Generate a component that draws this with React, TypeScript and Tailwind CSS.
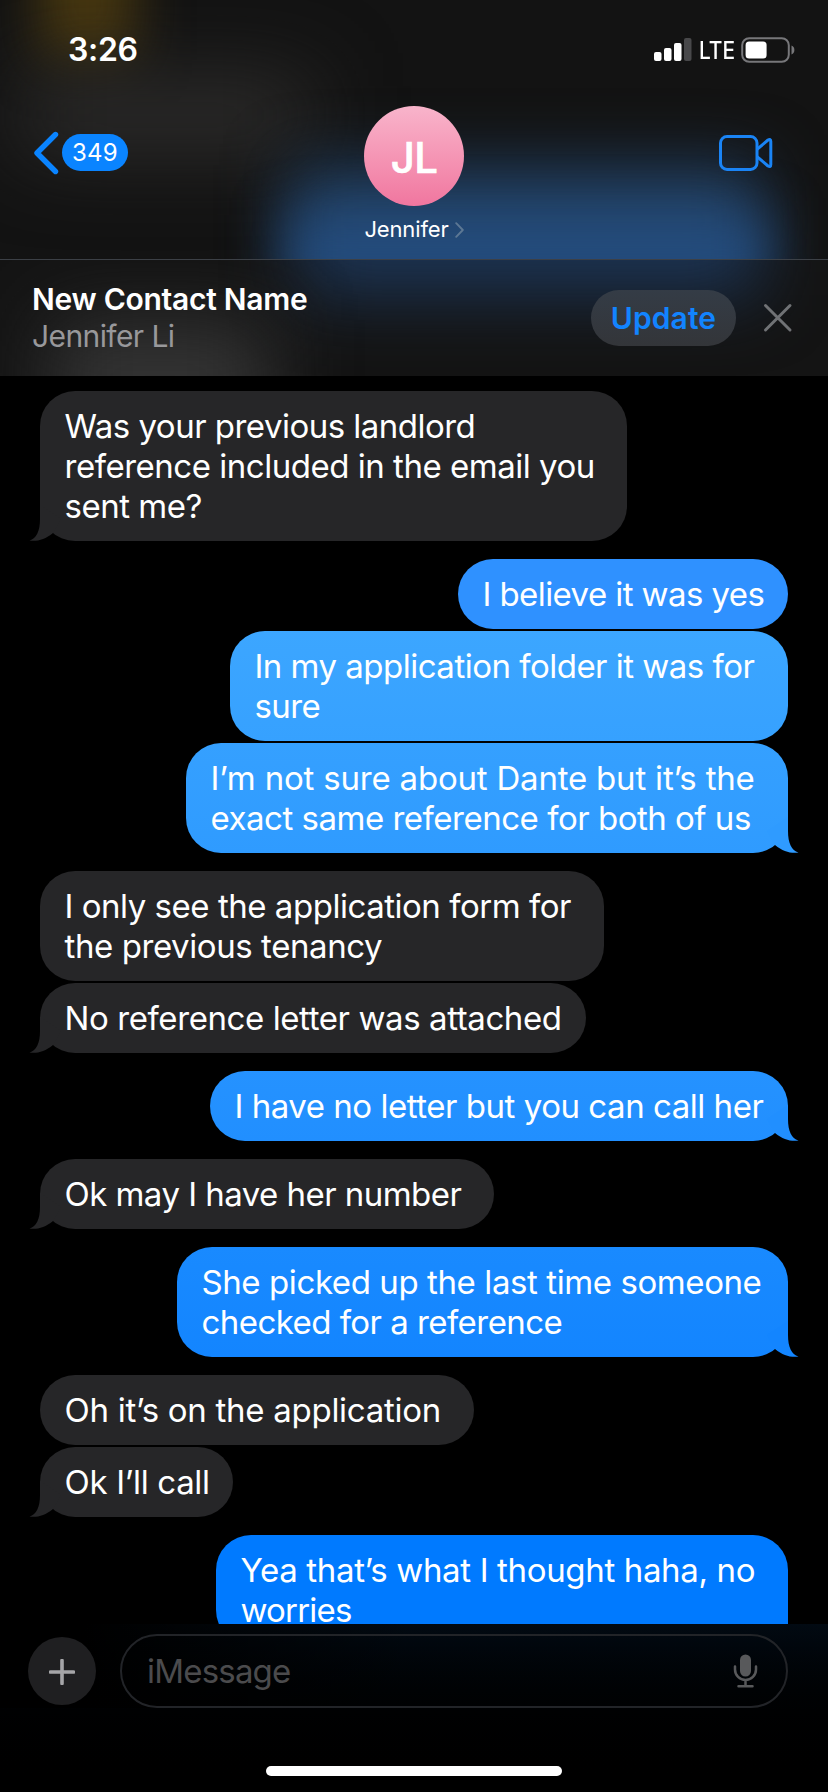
type Line = { text: string; spacing: string };

type Message = {
  from: "me" | "them";
  box: string;
  tail?: boolean;
  lines: Line[];
};

const messages: Message[] = [
  {
    from: "them",
    box: "mt-[15px] w-[587px] bg-[#262628] text-[#262628]",
    tail: true,
    lines: [
      { text: "Was your previous landlord", spacing: "tracking-[-0.52px]" },
      { text: "reference included in the email you", spacing: "tracking-[-0.48px]" },
      { text: "sent me?", spacing: "tracking-[-0.48px]" },
    ],
  },
  {
    from: "me",
    box: "mt-[18px] w-[330px] bg-[#2f91ff] text-[#2f91ff]",
    lines: [{ text: "I believe it was yes", spacing: "tracking-[-0.58px]" }],
  },
  {
    from: "me",
    box: "mt-[2px] w-[558px] bg-linear-to-b from-[#3ca6ff] to-[#36a1ff] text-[#36a1ff]",
    lines: [
      { text: "In my application folder it was for", spacing: "tracking-[-0.51px]" },
      { text: "sure", spacing: "tracking-[-0.6px]" },
    ],
  },
  {
    from: "me",
    box: "mt-[2px] w-[602px] bg-linear-to-b from-[#35a0ff] to-[#2f9bff] text-[#2f9bff]",
    tail: true,
    lines: [
      { text: "I’m not sure about Dante but it’s the", spacing: "tracking-[-0.2px]" },
      { text: "exact same reference for both of us", spacing: "tracking-[-0.49px]" },
    ],
  },
  {
    from: "them",
    box: "mt-[18px] w-[564px] bg-[#262628] text-[#262628]",
    lines: [
      { text: "I only see the application form for", spacing: "tracking-[-0.47px]" },
      { text: "the previous tenancy", spacing: "tracking-[-0.42px]" },
    ],
  },
  {
    from: "them",
    box: "mt-[2px] w-[546px] bg-[#262628] text-[#262628]",
    tail: true,
    lines: [{ text: "No reference letter was attached", spacing: "tracking-[-0.41px]" }],
  },
  {
    from: "me",
    box: "mt-[18px] w-[578px] bg-linear-to-b from-[#2592ff] to-[#218fff] text-[#218fff]",
    tail: true,
    lines: [{ text: "I have no letter but you can call her", spacing: "tracking-[-0.47px]" }],
  },
  {
    from: "them",
    box: "mt-[18px] w-[454px] bg-[#262628] text-[#262628]",
    tail: true,
    lines: [{ text: "Ok may I have her number", spacing: "tracking-[-0.54px]" }],
  },
  {
    from: "me",
    box: "mt-[18px] w-[611px] bg-linear-to-b from-[#198aff] to-[#1385ff] text-[#1385ff]",
    tail: true,
    lines: [
      { text: "She picked up the last time someone", spacing: "tracking-[-0.41px]" },
      { text: "checked for a reference", spacing: "tracking-[-0.55px]" },
    ],
  },
  {
    from: "them",
    box: "mt-[18px] w-[434px] bg-[#262628] text-[#262628]",
    lines: [{ text: "Oh it’s on the application", spacing: "tracking-[-0.28px]" }],
  },
  {
    from: "them",
    box: "mt-[2px] w-[193px] bg-[#262628] text-[#262628]",
    tail: true,
    lines: [{ text: "Ok I’ll call", spacing: "tracking-[-0.32px]" }],
  },
  {
    from: "me",
    box: "mt-[18px] w-[572px] bg-[#007aff] text-[#007aff]",
    tail: true,
    lines: [
      { text: "Yea that’s what I thought haha, no", spacing: "tracking-[-0.35px]" },
      { text: "worries", spacing: "tracking-[-0.8px]" },
    ],
  },
];

function Tail({ side }: { side: "left" | "right" }) {
  return (
    <svg
      className={
        side === "left"
          ? "absolute bottom-0 -left-[12px]"
          : "absolute -right-[12px] bottom-0 -scale-x-100"
      }
      width="34"
      height="36"
      viewBox="0 0 34 36"
      fill="currentColor"
    >
      <path d="M12 0V14C12 26 8.5 33.5 1.5 35.6C9.5 36.6 17 34.5 25 28L33 14Z" />
    </svg>
  );
}

function Bubble({ message }: { message: Message }) {
  const mine = message.from === "me";
  return (
    <div
      className={`relative shrink-0 rounded-[35px] py-[15px] pl-[24.5px] ${mine ? "self-end" : "self-start"} ${message.box}`}
    >
      {message.tail && <Tail side={mine ? "right" : "left"} />}
      {message.lines.map((line) => (
        <p
          key={line.text}
          className={`relative text-[33px] leading-[40px] whitespace-nowrap text-white ${line.spacing}`}
        >
          {line.text}
        </p>
      ))}
    </div>
  );
}

function StatusBar() {
  return (
    <div className="relative flex h-[100px] items-center pr-[33px] pl-[68px]">
      <span className="text-[32px] font-semibold tracking-[-0.3px] text-white">3:26</span>
      <div className="ml-auto flex items-center">
        <svg width="38" height="24" viewBox="0 0 38 24" fill="#fff">
          <rect x="0" y="14" width="7.5" height="9" rx="2" />
          <rect x="10" y="10" width="7.5" height="13" rx="2" />
          <rect x="20" y="5" width="7.5" height="18" rx="2" />
          <rect x="30" y="0" width="7.5" height="23" rx="2" fill="#48484a" />
        </svg>
        <span className="ml-[7px] w-[36px] origin-left scale-x-[0.87] pt-px text-[24px] font-medium text-white">
          LTE
        </span>
        <svg className="ml-[6px]" width="54" height="26" viewBox="0 0 54 26" fill="none">
          <rect x="1.2" y="1.2" width="46.6" height="23.6" rx="7" stroke="#77777a" strokeWidth="2" />
          <rect x="4.6" y="4.6" width="21" height="17" rx="3.5" fill="#fff" />
          <path d="M50.5 8.5C52.4 9.3 53.4 11 53.4 13S52.4 16.7 50.5 17.5Z" fill="#77777a" />
        </svg>
      </div>
    </div>
  );
}

function Header() {
  return (
    <header className="relative h-[260px] shrink-0 overflow-hidden border-b-[1.5px] border-[#3c4046] bg-[#131313]">
      <div className="absolute -top-[60px] left-[40px] h-[120px] w-[95px] bg-[#46360f] blur-[26px]" />
      <div className="absolute top-[80px] left-[20px] h-[70px] w-[290px] bg-[#302f2e] blur-[42px]" />
      <div className="absolute top-[165px] left-[290px] h-[110px] w-[470px] bg-[#213f61] blur-[32px]" />
      <div className="absolute top-[215px] left-[285px] h-[120px] w-[485px] bg-[#26538a]/80 blur-[26px]" />
      <StatusBar />
      <div className="relative flex h-[158px] items-start justify-between pr-[55px] pl-[33px]">
        <div className="flex h-[105px] w-[140px] items-center">
          <svg width="27" height="44" viewBox="0 0 27 44" fill="none">
            <path
              d="M22.5 3.5L4 22L22.5 40.5"
              stroke="#0a84ff"
              strokeWidth="5.4"
              strokeLinecap="round"
              strokeLinejoin="round"
            />
          </svg>
          <span className="ml-[2px] flex h-[37px] w-[66px] items-center justify-center rounded-full bg-[#0a84ff] text-[24px] tracking-[0.3px] text-white">
            349
          </span>
        </div>
        <div className="flex w-[160px] flex-col items-center pt-[6px]">
          <div className="flex size-[100px] items-center justify-center rounded-full bg-linear-to-b from-[#f8b4cb] to-[#f0769f] pt-[3px]">
            <span className="text-[42px] font-medium tracking-[-0.8px] text-white [-webkit-text-stroke:0.7px_white] [stroke-linejoin:round]">
              JL
            </span>
          </div>
          <div className="flex h-[47px] items-center">
            <span className="text-[22px] tracking-[-0.15px] text-white">Jennifer</span>
            <svg className="ml-[6px]" width="9" height="16" viewBox="0 0 9 16" fill="none">
              <path d="M1.2 1.2L7.8 8L1.2 14.8" stroke="#5d7894" strokeWidth="1.9" strokeLinecap="round" strokeLinejoin="round" />
            </svg>
          </div>
        </div>
        <div className="flex h-[105px] w-[118px] items-center justify-end">
          <svg width="54" height="36" viewBox="0 0 54 36" fill="none" stroke="#1a84f5" strokeWidth="3" strokeLinejoin="round">
            <rect x="1.5" y="1.6" width="36.5" height="32.8" rx="6.5" />
            <path d="M38 14.4L49 5Q51.8 3.4 51.8 6.4V29.6Q51.8 32.6 49 31L38 21.6" />
          </svg>
        </div>
      </div>
    </header>
  );
}

function Banner() {
  return (
    <section className="relative flex h-[116px] shrink-0 items-center overflow-hidden bg-[#141414] pr-[35px] pl-[32px]">
      <div className="absolute -top-[70px] left-[300px] h-[105px] w-[460px] bg-[#1c3454] blur-[34px]" />
      <div className="absolute top-[60px] left-[50px] h-[130px] w-[220px] bg-[#343434] blur-[40px]" />
      <div className="relative">
        <h1 className="text-[30px] leading-[37px] font-semibold tracking-[-0.28px] text-white">
          New Contact Name
        </h1>
        <p className="text-[30px] leading-[37px] tracking-[-0.6px] text-[#98989b]">Jennifer Li</p>
      </div>
      <button className="relative ml-auto flex h-[56px] w-[145px] items-center justify-center rounded-full bg-linear-to-b from-[#343c46] to-[#333539] pt-px text-[30px] font-semibold tracking-[0.1px] text-[#1284ff]">
        Update
      </button>
      <svg className="relative ml-[27px]" width="30" height="30" viewBox="0 0 30 30" fill="none">
        <path d="M2.5 2.5L27 27M27 2.5L2.5 27" stroke="#707275" strokeWidth="3" strokeLinecap="round" />
      </svg>
    </section>
  );
}

function Composer() {
  return (
    <footer className="flex h-[168px] shrink-0 flex-col items-center bg-linear-to-b from-[#020a12] via-[#000204] via-40% to-black">
      <div className="flex w-full items-start bg-linear-to-r from-black from-10% to-transparent to-50% pt-[10px] pr-[40px] pl-[28px]">
        <button className="mt-[3px] flex size-[68px] items-center justify-center rounded-full bg-[#1f1f21]">
          <svg className="mt-[2px]" width="26" height="26" viewBox="0 0 26 26" fill="none">
            <path d="M13 1.5V24.5M1.5 13H24.5" stroke="#a5a5a8" strokeWidth="3.6" strokeLinecap="round" />
          </svg>
        </button>
        <div className="ml-[24px] flex h-[74px] flex-1 items-center rounded-full border-2 border-[#222428] pr-[28px] pl-[25px]">
          <span className="pt-px text-[33px] tracking-[-0.8px] text-[#4b4b4d]">iMessage</span>
          <svg className="ml-auto" width="25" height="34" viewBox="0 0 25 34" fill="none" stroke="#58595b" strokeWidth="2.5">
            <rect x="7" y="0.5" width="11" height="22" rx="5.5" fill="#58595b" stroke="none" />
            <path d="M2 12.5V15.5A10.5 10.5 0 0 0 23 15.5V12.5M12.5 26V32M5.5 32.2H19.5" strokeLinecap="round" />
          </svg>
        </div>
      </div>
      <div className="mt-[58px] h-[10px] w-[296px] rounded-full bg-white" />
    </footer>
  );
}

export default function App() {
  return (
    <main className="flex h-[1792px] w-[828px] flex-col overflow-hidden bg-black font-['Inter','Noto_Sans',sans-serif]">
      <Header />
      <Banner />
      <div className="flex h-[1248px] shrink-0 flex-col overflow-hidden px-[40px]">
        {messages.map((message) => (
          <Bubble key={message.lines[0].text} message={message} />
        ))}
      </div>
      <Composer />
    </main>
  );
}
